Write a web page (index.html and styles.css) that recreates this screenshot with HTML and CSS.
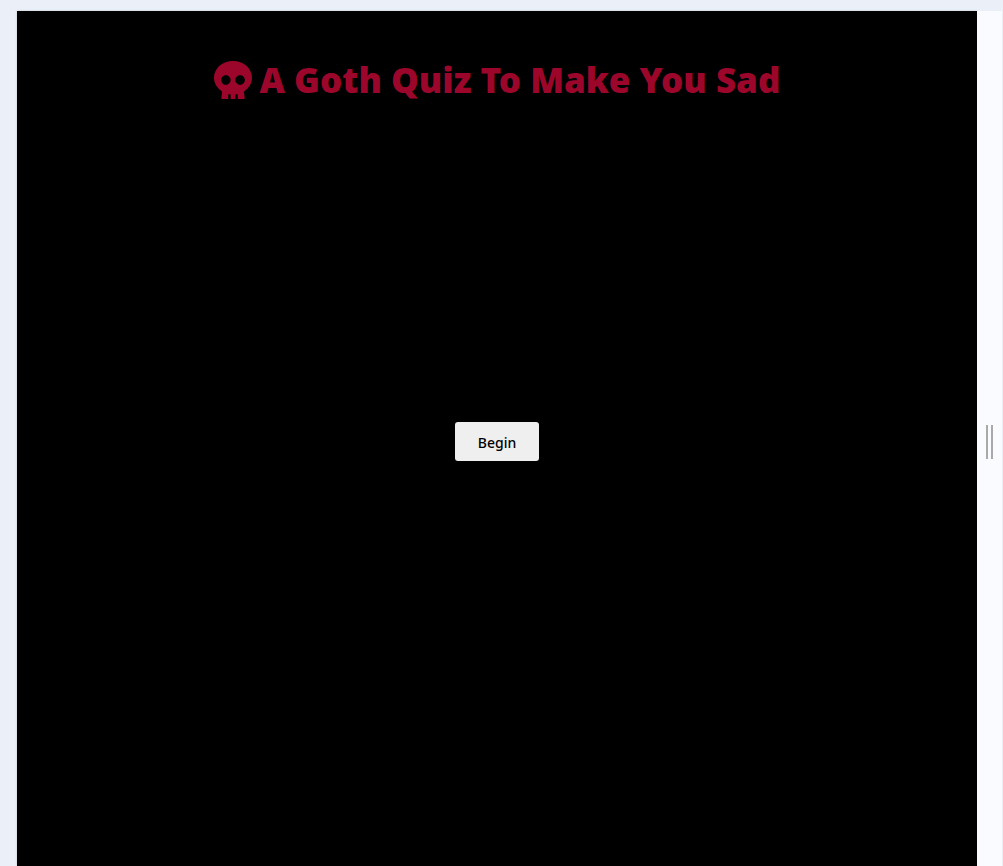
FILE: index.html
```html
<!DOCTYPE html>
<html lang="en">
<head>
<meta charset="utf-8">
<meta name="viewport" content="width=device-width, initial-scale=1">
<title>A Goth Quiz To Make You Sad</title>
<link rel="stylesheet" href="styles.css">
</head>
<body>
<div class="workspace">
  <main class="quiz">
    <h1 class="quiz-title">
      <svg class="skull" viewBox="0 0 512 512" aria-hidden="true"><path fill="currentColor" d="M256 0C114.600 0 0 100.300 0 224c0 70.100 36.900 132.600 94.500 173.700 9.600 6.900 15.200 18.100 13.500 29.900l-9.400 66.200c-1.400 9.600 6 18.200 15.700 18.200H192v-56c0-4.400 3.600-8 8-8h16c4.400 0 8 3.600 8 8v56h64v-56c0-4.400 3.600-8 8-8h16c4.400 0 8 3.600 8 8v56h77.700c9.700 0 17.100-8.600 15.700-18.200l-9.400-66.200c-1.700-11.700 3.800-23 13.500-29.900C475.100 356.600 512 294.100 512 224 512 100.300 397.400 0 256 0zm-96 320c-35.300 0-64-28.700-64-64s28.700-64 64-64 64 28.700 64 64-28.700 64-64 64zm192 0c-35.300 0-64-28.700-64-64s28.700-64 64-64 64 28.700 64 64-28.700 64-64 64z"/></svg>
      <span>A Goth Quiz To Make You Sad</span>
    </h1>
    <div class="quiz-body">
      <button class="begin" type="button">Begin</button>
    </div>
  </main>
  <div class="divider" role="separator" aria-orientation="vertical">
    <span class="grip"></span>
  </div>
</div>
</body>
</html>
```
FILE: styles.css
```css
* { box-sizing: border-box; }
body {
  margin: 0;
  font-family: "Noto Sans", sans-serif;
  background: #ebf0f8;
}
.workspace {
  display: flex;
  min-height: 100vh;
  padding: 11px 1px 0 17px;
}
.quiz {
  flex: 1;
  display: flex;
  flex-direction: column;
  background: #000;
  box-shadow: 0 0 2px #b9c4c8;
}
.quiz-title {
  display: flex;
  justify-content: center;
  align-items: center;
  gap: 8px;
  margin: 0;
  padding-top: 46px;
  font-size: 35px;
  line-height: 46px;
  font-weight: 900;
  color: #9c062b;
}
.skull {
  width: 38px;
  height: 38px;
}
.quiz-body {
  flex: 1;
  display: flex;
  justify-content: center;
  align-items: center;
  padding-bottom: 86px;
}
.begin {
  padding: 10px 23px 8px;
  border: 0;
  border-radius: 3px;
  background: #efefef;
  color: #000;
  font-family: "Noto Sans", sans-serif;
  font-size: 14px;
  line-height: 21px;
  font-weight: 500;
}
.divider {
  display: flex;
  justify-content: center;
  align-items: center;
  width: 25px;
  padding-top: 6px;
  background: #f9fbff;
}
.grip {
  width: 7px;
  height: 34px;
  border: solid #a9a9a9;
  border-width: 0 2px;
}
```
